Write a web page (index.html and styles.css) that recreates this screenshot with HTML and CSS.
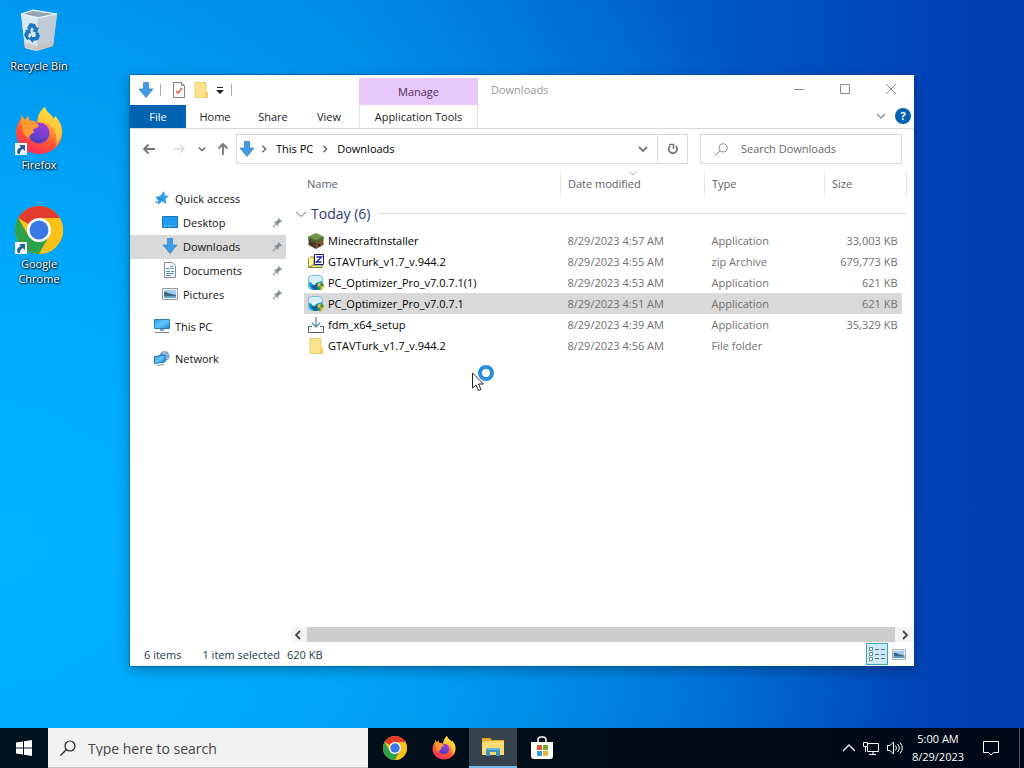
FILE: index.html
```html
<!DOCTYPE html>
<html lang="en">
<head>
    <meta charset="utf-8">
    <title>Downloads</title>
    <link rel="stylesheet" href="styles.css">
</head>
<body>
    <!-- shared icons -->
    <svg class="sprite" aria-hidden="true">
        <defs>
            <linearGradient id="ffBody" x1="0.8" y1="0" x2="0.3" y2="1">
                <stop offset="0" stop-color="#fff44f"/>
                <stop offset="0.35" stop-color="#ffa436"/>
                <stop offset="0.65" stop-color="#ff5634"/>
                <stop offset="1" stop-color="#f52b62"/>
            </linearGradient>
            <linearGradient id="ffGlobe" x1="0.7" y1="0" x2="0.3" y2="1">
                <stop offset="0" stop-color="#a03ae0"/>
                <stop offset="1" stop-color="#5542c8"/>
            </linearGradient>
            <linearGradient id="binSide" x1="0" y1="0" x2="0" y2="1">
                <stop offset="0" stop-color="#d2e4f0"/>
                <stop offset="0.7" stop-color="#d5dbe3"/>
                <stop offset="1" stop-color="#c9bfbd"/>
            </linearGradient>
            <linearGradient id="screen" x1="0" y1="0" x2="1" y2="1">
                <stop offset="0" stop-color="#2f9fe8"/>
                <stop offset="0.5" stop-color="#62c4fb"/>
                <stop offset="1" stop-color="#1683cf"/>
            </linearGradient>
        </defs>
        <symbol id="chrome" viewBox="0 0 48 48">
            <circle cx="24" cy="24" r="24" fill="#fbc116"/>
            <path d="M24 24 3.2 12A24 24 0 0 1 44.8 12H24z" fill="#e33b2e"/>
            <path d="M3.2 12A24 24 0 0 0 24 48L34.4 30 24 24 13.6 30z" fill="#2da14c"/>
            <path d="M24 12h20.8A24 24 0 0 1 24 48l10.4-18z" fill="#fbc116"/>
            <circle cx="24" cy="24" r="12" fill="#fff"/>
            <circle cx="24" cy="24" r="9.5" fill="#3b78e7"/>
        </symbol>
        <symbol id="firefox" viewBox="0 0 48 48">
            <path d="M30 0c1 5 6 7 9 12l1-3c6 6 8 12 7 19-1 11-11 19-23 19S1 38 1 26c0-6 2-10 5-14V8l4 5 3-4 1 5c3-1 6 0 8 2 0-6 3-13 8-16z" fill="url(#ffBody)"/>
            <path d="M30 0c1 5 6 7 9 12l1-3c5 6 8 14 6 21l-5 9c2-9-1-17-6-21-3-3-8-3-12-1 0-7 3-14 7-17z" fill="#ffd63f" opacity="0.75"/>
            <circle cx="24" cy="26" r="10.500" fill="url(#ffGlobe)"/>
            <path d="M6 12V8l4 5 3-4 2 6c4-1 8 1 9 4-1 2-5 2-6 4 0 1 2 2 0 3-3 2-5 3-3 6-5-3-8-6-8-12z" fill="#ff9a32"/>
            <path d="M16 30c5 4 11 3 15 0-2 5-9 8-15 3z" fill="#4a3aa8" opacity="0.5"/>
        </symbol>
        <symbol id="shortcut" viewBox="0 0 12 12">
            <path d="M0 0h12v12H0z" fill="#f7f9fb"/>
            <path d="M4 2h6v6L8 6C6 7 5 8 5 11H3C1 8 3 5 6 4z" fill="#29609f"/>
        </symbol>
        <symbol id="down-arrow" viewBox="0 0 16 16">
            <path d="M5.500.5h5V7H15l-7 8.500L1 7h4.500z" fill="#3e9be4" stroke="#2b7cc0" stroke-width="0.700"/>
        </symbol>
        <symbol id="folder" viewBox="0 0 16 16">
            <path d="M2 .5h11V10l1.500 1v4.500H2z" fill="#fae38c" stroke="#edcf69"/>
            <path d="M12.500 10.500 14.500 9v6.500h-2z" fill="#f3cd57"/>
        </symbol>
        <symbol id="optimizer" viewBox="0 0 16 16">
            <rect x="0.500" y="0.500" width="14" height="14" rx="3" fill="#d7eef7" stroke="#75b9df"/>
            <path d="M1 7c4 2 8 1 13-1v5c0 3-2 4-6 4s-7-2-7-5z" fill="#159bd0"/>
            <path d="M3 10c3 1 5 0 7-2l1 6c-4 2-7 0-8-4z" fill="#0c5e9d"/>
            <path d="M4 6l4 1-1 3-3-1z" fill="#e9fbff"/>
            <path d="M12.500 7.500 15.500 9v2.500c0 2-1 3-3 4-2-1-3-2-3-4V9z" fill="#e8c445"/>
            <path d="M12.500 7.500v4h3V9zM9.500 11.500h3v4c-2-1-3-2-3-4z" fill="#388a46"/>
        </symbol>
        <symbol id="picture" viewBox="0 0 16 12">
            <path d="M.5.5h15v11H.5z" fill="#f6f8fa" stroke="#8d9aa5"/>
            <path d="M2 2h12v8H2z" fill="#9fcdf0"/>
            <path d="M2 4c4 0 5 2 12 3v3H2z" fill="#3c6784"/>
            <path d="M2 8h12v2H2z" fill="#6ba2c4"/>
        </symbol>
        <symbol id="pin" viewBox="0 0 12 12">
            <path d="M7 1l4 4-1 .6-.8-.2L7 7.500 6.700 10 2 5.300 4.500 5l2.200-2.200L6.500 2z" fill="#87919a"/>
            <path d="M4.500 7.500 1 11" stroke="#87919a" stroke-width="1.200"/>
        </symbol>
        <symbol id="chevron" viewBox="0 0 10 10">
            <path d="M1 3l4 4 4-4" fill="none" stroke="currentColor" stroke-width="1.800"/>
        </symbol>
        <symbol id="chevron-thin" viewBox="0 0 10 10">
            <path d="M0 3l5 4.500L10 3" fill="none" stroke="currentColor"/>
        </symbol>
        <symbol id="search" viewBox="0 0 16 16">
            <circle cx="10" cy="6" r="5" fill="none" stroke="currentColor" stroke-width="1.200"/>
            <path d="M6.500 9.500.5 15.500" stroke="currentColor" stroke-width="1.200"/>
        </symbol>
    </svg>

    <main class="desktop">
        <div class="shortcuts">
            <button class="shortcut">
                <svg class="shortcut-icon" viewBox="0 0 48 48">
                    <path d="M6 6 18 2l24 4-4 32-17 5L10 40z" fill="url(#binSide)"/>
                    <path d="M6 6l17 4-1 33-12-3z" fill="#d8e8f2"/>
                    <path d="M23 10l19-4-4 32-16 5z" fill="#c0cbd5"/>
                    <path d="M8 6l10-3 21 3-16 3z" fill="#93a5b2"/>
                    <path d="M6 6 18 2l24 4-19 4z" fill="none" stroke="#eef8ff"/>
                    <path d="M9 34l13 4 16-4-1 4-15 5-12-4z" fill="#cbbfb9" opacity="0.7"/>
                    <g fill="#1977bd">
                        <path d="M12 20l3-5 5 1 2 4 2-1-2 6-5-2 2-1-2-3-2 3z"/>
                        <path d="M10 22l5-1 1 5-2-1-1 3 2 3-3 1-3-5 2-4z"/>
                        <path d="M17 29h3l1-2-1-2 3-1 2 4-2 4-5 1v2l-4-4 3-4z"/>
                    </g>
                </svg>
                <span>Recycle Bin</span>
            </button>
            <button class="shortcut">
                <span class="shortcut-picture">
                    <svg class="shortcut-icon"><use href="#firefox"/></svg>
                    <svg class="shortcut-badge"><use href="#shortcut"/></svg>
                </span>
                <span>Firefox</span>
            </button>
            <button class="shortcut">
                <span class="shortcut-picture">
                    <svg class="shortcut-icon"><use href="#chrome"/></svg>
                    <svg class="shortcut-badge"><use href="#shortcut"/></svg>
                </span>
                <span>Google<br>Chrome</span>
            </button>
        </div>

        <section class="window" aria-label="Downloads">
            <header class="titlebar">
                <div class="quick-tools">
                    <svg class="icon"><use href="#down-arrow"/></svg>
                    <span class="divider"></span>
                    <button class="plain tool-first" aria-label="Properties">
                        <svg class="icon" viewBox="0 0 16 16">
                            <path d="M2.500.5h8l3 3v12h-11z" fill="#fff" stroke="#858585"/>
                            <path d="M10.500.5v3h3" fill="none" stroke="#858585"/>
                            <path d="M5 9l2 2 4-5" fill="none" stroke="#d9684a" stroke-width="1.600"/>
                        </svg>
                    </button>
                    <button class="plain" aria-label="New folder"><svg class="icon"><use href="#folder"/></svg></button>
                    <button class="plain" aria-label="Customize">
                        <svg class="icon-small" viewBox="0 0 10 10"><path d="M2 2h6v1H2zM1 5h8L5 9z" fill="#222"/></svg>
                    </button>
                    <span class="divider"></span>
                </div>
                <div class="manage">Manage</div>
                <h1 class="window-title">Downloads</h1>
                <div class="controls">
                    <button class="plain" aria-label="Minimize">
                        <svg class="icon-small" viewBox="0 0 10 10"><path d="M0 5.500h10" stroke="#888"/></svg>
                    </button>
                    <button class="plain" aria-label="Maximize">
                        <svg class="icon-small" viewBox="0 0 10 10"><path d="M.5.5h9v9h-9z" fill="none" stroke="#888"/></svg>
                    </button>
                    <button class="plain" aria-label="Close">
                        <svg class="icon-small" viewBox="0 0 10 10"><path d="M0 0l10 10M10 0 0 10" stroke="#888"/></svg>
                    </button>
                </div>
            </header>

            <nav class="ribbon">
                <button class="tab tab-file">File</button>
                <button class="tab">Home</button>
                <button class="tab">Share</button>
                <button class="tab tab-view">View</button>
                <button class="tab tab-tools">Application Tools</button>
                <div class="ribbon-end">
                    <button class="plain" aria-label="Expand the ribbon"><svg class="icon-small muted"><use href="#chevron"/></svg></button>
                    <button class="help" aria-label="Help">?</button>
                </div>
            </nav>

            <div class="toolbar">
                <div class="history">
                    <button class="plain" aria-label="Back">
                        <svg class="icon" viewBox="0 0 16 16"><path d="M14 8H3M7.500 3.500 3 8l4.500 4.500" fill="none" stroke="#777" stroke-width="1.800"/></svg>
                    </button>
                    <button class="plain forward" aria-label="Forward">
                        <svg class="icon" viewBox="0 0 16 16"><path d="M2 8h10M8 4l4 4-4 4" fill="none" stroke="#d8d8d8" stroke-width="1.500"/></svg>
                    </button>
                    <button class="plain" aria-label="Recent locations"><svg class="icon-tiny"><use href="#chevron"/></svg></button>
                    <button class="plain" aria-label="Up">
                        <svg class="icon" viewBox="0 0 16 16"><path d="M8 14V3M3.500 7.500 8 3l4.500 4.500" fill="none" stroke="#777" stroke-width="1.800"/></svg>
                    </button>
                </div>
                <div class="address">
                    <svg class="icon"><use href="#down-arrow"/></svg>
                    <svg class="icon-tiny crumb-arrow"><use href="#chevron"/></svg>
                    <button class="plain crumb">This PC</button>
                    <svg class="icon-tiny crumb-arrow"><use href="#chevron"/></svg>
                    <button class="plain crumb">Downloads</button>
                    <button class="plain previous" aria-label="Previous locations"><svg class="icon-small"><use href="#chevron"/></svg></button>
                    <button class="plain refresh" aria-label="Refresh">
                        <svg class="icon" viewBox="0 0 16 16">
                            <path d="M10.800 5A4.200 4.200 0 1 1 5 5" fill="none" stroke="#777" stroke-width="1.800"/>
                            <path d="M4 3.500h4.500V8" fill="none" stroke="#777" stroke-width="1.600"/>
                        </svg>
                    </button>
                </div>
                <label class="search-box">
                    <svg class="search-icon"><use href="#search"/></svg>
                    <input type="text" placeholder="Search Downloads" aria-label="Search Downloads">
                </label>
            </div>

            <div class="content">
                <nav class="sidebar">
                    <a class="place place-root" href="#">
                        <svg class="icon" viewBox="0 0 16 16">
                            <path d="M10 1l1 4.500 4 .5-3.500 3 .8 5L8 11.500 3.500 15l1-5L1 7l5-1z" fill="#359de6"/>
                            <path d="M3 9h5M1 12h4" stroke="#1b79bd"/>
                        </svg>Quick access
                    </a>
                    <a class="place" href="#">
                        <svg class="icon" viewBox="0 0 16 16"><path d="M.5 2.500h15v11H.5z" fill="#229af0" stroke="#1676bd"/><path d="M2 12h8M12 12h2" stroke="#a8dcff" stroke-dasharray="1 1"/></svg>Desktop
                        <svg class="pin"><use href="#pin"/></svg>
                    </a>
                    <a class="place selected" href="#">
                        <svg class="icon"><use href="#down-arrow"/></svg>Downloads
                        <svg class="pin"><use href="#pin"/></svg>
                    </a>
                    <a class="place" href="#">
                        <svg class="icon" viewBox="0 0 16 16"><path d="M2.500.5h8l3 3v12h-11z" fill="#fff" stroke="#7c8c98"/><path d="M4 6.500h3M8 4.500h3M8 6.500h4M4 9.500h4M9 9.500h3M4 11.500h8M4 13.500h5" stroke="#4d93bf"/></svg>Documents
                        <svg class="pin"><use href="#pin"/></svg>
                    </a>
                    <a class="place" href="#">
                        <svg class="icon"><use href="#picture"/></svg>Pictures
                        <svg class="pin"><use href="#pin"/></svg>
                    </a>
                    <a class="place place-root spaced" href="#">
                        <svg class="icon" viewBox="0 0 16 16"><path d="M.5 1.500h15v9H.5z" fill="url(#screen)" stroke="#2b80b7"/><path d="M6 11h4v2H6z" fill="#8aa3b5"/><path d="M1 14.500h14" stroke="#71899b"/></svg>This PC
                    </a>
                    <a class="place place-root spaced" href="#">
                        <svg class="icon" viewBox="0 0 16 16"><circle cx="10.500" cy="6" r="5" fill="#6d9fc4"/><path d="M8 2c3 1 2 4 6 7M11 1c-1 3 1 4 4 4" stroke="#b9dbf0" fill="none"/><path d="M.5 6.500 11 5v7L.5 13.500z" fill="url(#screen)" stroke="#1b75b3"/><path d="M3 15.500l7-1" stroke="#7890a0"/></svg>Network
                    </a>
                </nav>

                <div class="files">
                    <table>
                        <colgroup>
                            <col class="col-edge"><col><col class="col-date"><col class="col-type"><col class="col-size"><col class="col-end">
                        </colgroup>
                        <thead>
                            <tr>
                                <td></td>
                                <th class="head-name">Name</th>
                                <th class="sorted"><svg class="sort-mark"><use href="#chevron-thin"/></svg>Date modified</th>
                                <th>Type</th>
                                <th colspan="2" class="head-size">Size</th>
                            </tr>
                        </thead>
                        <tbody>
                            <tr class="group">
                                <th colspan="6"><div class="group-line"><svg class="group-chevron"><use href="#chevron-thin"/></svg>Today (6)</div></th>
                            </tr>
                            <tr>
                                <td></td>
                                <td class="name"><div class="file">
                                    <svg class="icon" viewBox="0 0 16 16"><path d="M8 0l7.500 3.500L8 7.500.5 3.500z" fill="#71944a"/><path d="M.5 3.500 8 7.500V16L.5 12z" fill="#543b27"/><path d="M15.500 3.500 8 7.500V16l7.500-4z" fill="#795034"/><path d="M.5 3.500 8 7.500l7.500-4v3L13 7v2l-3-1v2L8 9 6 10V8L3 9V6L.5 7z" fill="#496c2b"/><path d="M3 10h2v2H3zM10 11h2v2h-2z" fill="#352518"/></svg>MinecraftInstaller
                                </div></td>
                                <td>8/29/2023 4:57 AM</td><td>Application</td><td class="size">33,003 KB</td><td></td>
                            </tr>
                            <tr>
                                <td></td>
                                <td class="name"><div class="file">
                                    <svg class="icon" viewBox="0 0 16 16"><path d="M.5 13.500V5L2.500 3H6v10.500z" fill="#fff79b" stroke="#999026"/><path d="M1 13.500h13V11H5z" fill="#f7ef80" stroke="#77783c"/><path d="M6.500.5h9v10h-9z" fill="#fff" stroke="#17178e"/><path d="M8.500 3h5l-5 5h5" fill="none" stroke="#2222a1" stroke-width="1.300"/></svg>GTAVTurk_v1.7_v.944.2
                                </div></td>
                                <td>8/29/2023 4:55 AM</td><td>zip Archive</td><td class="size">679,773 KB</td><td></td>
                            </tr>
                            <tr>
                                <td></td>
                                <td class="name"><div class="file"><svg class="icon"><use href="#optimizer"/></svg>PC_Optimizer_Pro_v7.0.7.1(1)</div></td>
                                <td>8/29/2023 4:53 AM</td><td>Application</td><td class="size">621 KB</td><td></td>
                            </tr>
                            <tr class="selected-row">
                                <td></td>
                                <td class="name"><div class="file"><svg class="icon"><use href="#optimizer"/></svg>PC_Optimizer_Pro_v7.0.7.1</div></td>
                                <td>8/29/2023 4:51 AM</td><td>Application</td><td class="size">621 KB</td><td></td>
                            </tr>
                            <tr>
                                <td></td>
                                <td class="name"><div class="file">
                                    <svg class="icon" viewBox="0 0 16 16"><path d="M4 9.500H.5v6h15v-6H12" fill="none" stroke="#4f5b66"/><path d="M8 0v10M4 6l4 4 4-4" fill="none" stroke="#4f84a8" stroke-width="1.200"/></svg>fdm_x64_setup
                                </div></td>
                                <td>8/29/2023 4:39 AM</td><td>Application</td><td class="size">35,329 KB</td><td></td>
                            </tr>
                            <tr>
                                <td></td>
                                <td class="name"><div class="file"><svg class="icon"><use href="#folder"/></svg>GTAVTurk_v1.7_v.944.2</div></td>
                                <td>8/29/2023 4:56 AM</td><td>File folder</td><td></td><td></td>
                            </tr>
                        </tbody>
                    </table>
                    <div class="scrollbar">
                        <button class="plain scroll-left" aria-label="Scroll left"><svg class="icon-small"><use href="#chevron"/></svg></button>
                        <div class="thumb"></div>
                        <button class="plain scroll-right" aria-label="Scroll right"><svg class="icon-small"><use href="#chevron"/></svg></button>
                    </div>
                </div>
            </div>

            <footer class="status">
                <span class="count">6 items</span>
                <span class="chosen">1 item selected</span>
                <span>620 KB</span>
                <div class="views">
                    <button class="plain view-button active" aria-label="Details view">
                        <svg class="icon" viewBox="0 0 16 16"><path d="M.5 1.500h3v3h-3zM.5 6.500h3v3h-3zM.5 11.500h3v3h-3z" fill="#fff" stroke="#6f8791"/><path d="M6 3.500h4M12 3.500h4M6 8.500h4M12 8.500h4M6 12.500h4M12 12.500h4" stroke="#5b717c"/></svg>
                    </button>
                    <button class="plain view-button" aria-label="Large icons view"><svg class="view-picture"><use href="#picture"/></svg></button>
                </div>
            </footer>
        </section>

        <svg class="cursor" viewBox="0 0 24 28">
            <circle cx="15" cy="8" r="6" fill="#fff" stroke="#2a8cdd" stroke-width="4"/>
            <path d="M1.500 8v15l3.500-3 2.500 5.500 2.500-1L7.500 19h5z" fill="#fff" stroke="#222"/>
        </svg>
    </main>

    <footer class="taskbar">
        <button class="plain start" aria-label="Start">
            <svg class="icon" viewBox="0 0 16 16"><path d="M0 2.500l7-1v6H0zM8 1.300 16 0v7.500H8zM0 8.500h7v6l-7-1zM8 8.500h8V16l-8-1.300z" fill="#fff"/></svg>
        </button>
        <label class="task-search">
            <svg class="icon"><use href="#search"/></svg>
            <input type="text" placeholder="Type here to search" aria-label="Type here to search">
        </label>
        <div class="apps">
            <button class="plain app" aria-label="Google Chrome"><svg class="app-icon"><use href="#chrome"/></svg></button>
            <button class="plain app" aria-label="Firefox"><svg class="app-icon"><use href="#firefox"/></svg></button>
            <button class="plain app running" aria-label="File Explorer">
                <svg class="app-icon" viewBox="0 0 24 24"><path d="M1 3h8l2 2h12v15H1z" fill="#e9a927"/><path d="M3 6h20v14H1V8z" fill="#ffda73"/><path d="M5 21v-8h14v8h-4v-4H9v4z" fill="#3e91c2"/><path d="M5 13h14v2H5z" fill="#66b2d9"/></svg>
            </button>
            <button class="plain app" aria-label="Microsoft Store">
                <svg class="app-icon" viewBox="0 0 24 24"><path d="M8 7V4c0-2 1-3 3-3h2c2 0 3 1 3 3v3" fill="none" stroke="#fff" stroke-width="1.500"/><path d="M1 6h22v14c0 2-1 3-3 3H4c-2 0-3-1-3-3z" fill="#fff"/><path d="M7 9h5v5H7z" fill="#df5a35"/><path d="M13 9h5v5h-5z" fill="#75a928"/><path d="M7 15h5v5H7z" fill="#2ba1d2"/><path d="M13 15h5v5h-5z" fill="#edb43b"/></svg>
            </button>
        </div>
        <div class="tray">
            <button class="plain" aria-label="Show hidden icons"><svg class="tray-arrow" viewBox="0 0 12 12"><path d="M0 9l6-6 6 6" fill="none" stroke="#fff" stroke-width="1.300"/></svg></button>
            <button class="plain" aria-label="Network status"><svg class="icon" viewBox="0 0 16 16"><path d="M5 3.500h10.500v8h-11V7M10 12v3M6 14.500h7" fill="none" stroke="#fff"/><path d="M.5 2.500h4v4h-4zM2.500 7v5" fill="none" stroke="#fff"/></svg></button>
            <button class="plain" aria-label="Volume"><svg class="icon" viewBox="0 0 16 16"><path d="M0 5.500h3L6.500 2v12L3 10.500H.5v-5" fill="none" stroke="#fff"/><path d="M8.500 5.500q2 2.500 0 5M10.500 4q3.500 4 0 8M13 2.500q4.500 5.500 0 11" fill="none" stroke="#fff"/></svg></button>
            <time class="clock" datetime="2023-08-29T05:00">5:00 AM<br>8/29/2023</time>
            <button class="plain notifications" aria-label="Notifications"><svg class="icon" viewBox="0 0 16 16"><path d="M.5 1.500h15v11h-5L8 15l-2.500-2.500h-5z" fill="none" stroke="#fff"/></svg></button>
        </div>
    </footer>
</body>
</html>
```
FILE: styles.css
```css
* {
    box-sizing: border-box;
}

body {
    margin: 0;
    min-height: 100vh;
    display: flex;
    flex-direction: column;
    font-family: "Open Sans", "Noto Sans", sans-serif;
    font-size: 12px;
    line-height: 15px;
    color: #222;
}

button, input {
    font: inherit;
    color: inherit;
}

svg {
    display: block;
    flex: none;
}

.sprite {
    position: absolute;
    width: 0;
    height: 0;
}

.plain {
    display: flex;
    align-items: center;
    justify-content: center;
    padding: 0;
    border: none;
    background: none;
}

.icon { width: 16px; height: 16px; }
.icon-small { width: 10px; height: 10px; }
.icon-tiny { width: 8px; height: 8px; color: #666; }
.muted { color: #aaa; }

/* Desktop */
.desktop {
    flex: 1;
    position: relative;
    background:
        radial-gradient(ellipse 90% 110% at 0% 75%, #00b2ff 0%, rgba(0, 172, 255, 0.9) 35%, rgba(0, 150, 240, 0) 100%),
        linear-gradient(90deg, #0088e4 0%, #007cdc 35%, #0058c8 70%, #0044b8 90%, #003eb0 100%);
}

.shortcuts {
    display: flex;
    flex-direction: column;
    gap: 18px;
    width: 78px;
    padding-top: 8px;
}

.shortcut {
    display: flex;
    flex-direction: column;
    align-items: center;
    gap: 2px;
    min-height: 81px;
    padding: 0;
    border: none;
    background: none;
    color: #fff;
    font-size: 11px;
    text-shadow: 1px 1px 2px #000, 0 0 2px #000;
}

.shortcut-picture {
    position: relative;
}

.shortcut-icon {
    width: 48px;
    height: 48px;
}

.shortcut-badge {
    position: absolute;
    left: 0;
    bottom: 0;
    width: 12px;
    height: 12px;
}

/* Explorer window */
.window {
    position: absolute;
    top: 75px;
    right: 110px;
    bottom: 62px;
    left: 130px;
    display: flex;
    flex-direction: column;
    background: #fff;
    font-size: 11px;
    box-shadow: 0 0 0 1px rgba(0, 70, 120, 0.4), 0 4px 12px rgba(0, 0, 0, 0.3);
}

.titlebar {
    display: flex;
    height: 30px;
}

.quick-tools {
    display: flex;
    align-items: center;
    gap: 6px;
    width: 229px;
    padding-left: 8px;
}

.divider {
    width: 1px;
    height: 12px;
    background: #aaa;
}

.tool-first {
    margin-left: 4px;
}

.manage {
    width: 119px;
    margin-top: 3px;
    background: #e9c9fb;
    color: #472c58;
    line-height: 27px;
    text-align: center;
}

.window-title {
    margin: 0 0 0 13px;
    font-size: 11px;
    font-weight: normal;
    line-height: 30px;
    color: #999;
}

.controls {
    display: flex;
    margin-left: auto;
    padding-bottom: 2px;
}

.controls button {
    width: 46px;
}

.ribbon {
    display: flex;
    height: 24px;
    border-bottom: 1px solid #d9d9d9;
}

.tab {
    width: 58px;
    padding: 0;
    border: none;
    background: none;
}

.tab-file {
    width: 56px;
    background: #0063b1;
    color: #fff;
}

.tab-view {
    width: 54px;
}

.tab-tools {
    width: 119px;
    margin-left: 3px;
    border: 1px solid #e3e3e3;
    border-width: 0 1px;
}

.ribbon-end {
    display: flex;
    align-items: center;
    gap: 9px;
    margin-left: auto;
    padding: 0 3px 2px 0;
}

.help {
    width: 16px;
    height: 16px;
    padding: 0;
    border: none;
    border-radius: 50%;
    background: #0063b1;
    color: #fff;
    font-weight: bold;
}

.toolbar {
    display: flex;
    align-items: center;
    height: 40px;
    padding-right: 12px;
}

.history {
    display: flex;
    align-items: center;
    justify-content: space-between;
    width: 106px;
    padding: 0 5px 0 11px;
}

.forward {
    margin-left: 6px;
}

.address {
    display: flex;
    flex: 1;
    align-items: center;
    height: 30px;
    margin-right: 12px;
    padding-left: 2px;
    border: 1px solid #d9d9d9;
    color: #000;
}

.crumb {
    margin: 0 8px;
    padding-bottom: 2px;
}

.crumb-arrow {
    margin-left: 5px;
    transform: rotate(-90deg);
}

.crumb + .crumb-arrow {
    margin-left: 0;
}

.previous {
    width: 28px;
    height: 100%;
    margin-left: auto;
    color: #777;
}

.refresh {
    width: 30px;
    height: 100%;
    border-left: 1px solid #d9d9d9;
}

.search-box {
    display: flex;
    align-items: center;
    gap: 13px;
    width: 202px;
    height: 30px;
    padding-left: 14px;
    border: 1px solid #d9d9d9;
    color: #888;
}

.search-icon {
    width: 13px;
    height: 13px;
}

.search-box input, .task-search input {
    flex: 1;
    min-width: 0;
    padding: 0 0 2px;
    border: none;
    outline: none;
    background: none;
}

.search-box input::placeholder {
    color: #666;
}

.content {
    display: flex;
    flex: 1;
    min-height: 0;
}

.sidebar {
    width: 156px;
    padding-top: 18px;
}

.place {
    display: flex;
    align-items: center;
    gap: 5px;
    height: 24px;
    padding: 0 3px 2px 32px;
    color: #111;
    text-decoration: none;
}

.place-root {
    padding-left: 24px;
}

.spaced {
    margin-top: 8px;
}

.place.selected {
    background: #d9d9d9;
}

.pin {
    width: 11px;
    height: 11px;
    margin-left: auto;
}

.files {
    display: flex;
    flex: 1;
    flex-direction: column;
    padding-left: 10px;
}

table {
    width: calc(100% - 7px);
    table-layout: fixed;
    border-collapse: collapse;
    margin-top: 2px;
}

.col-edge { width: 8px; }
.col-date { width: 144px; }
.col-type { width: 120px; }
.col-size { width: 77px; }
.col-end { width: 5px; }

th, td {
    padding: 0 4px 0 7px;
    font-weight: normal;
    text-align: left;
    white-space: nowrap;
}

td {
    color: #707070;
}

td:first-child, td:last-child {
    padding: 0;
}

thead th {
    height: 26px;
    padding-bottom: 2px;
    border-left: 1px solid #e5e5e5;
    color: #58616b;
}

thead .head-name {
    border-left: none;
    padding-left: 3px;
}

thead .head-size {
    border-right: 1px solid #e5e5e5;
}

.sorted {
    position: relative;
}

.sort-mark {
    position: absolute;
    top: -2px;
    left: calc(50% - 4px);
    width: 8px;
    height: 8px;
    color: #999;
}

.group th {
    height: 33px;
    padding: 0;
    color: #29397c;
    font-size: 14px;
}

.group-line {
    display: flex;
    align-items: center;
    gap: 5px;
}

.group-line::after {
    content: "";
    flex: 1;
    height: 1px;
    margin-left: 3px;
    background: #dfdfdf;
}

.group-chevron {
    width: 10px;
    height: 10px;
    color: #777;
}

tbody td {
    height: 21px;
}

td.name {
    padding-left: 4px;
    color: #000;
}

.file {
    display: flex;
    align-items: center;
    gap: 4px;
}

.size {
    padding-right: 4px;
    text-align: right;
}

.selected-row td:not(:first-child):not(:last-child) {
    background: #d9d9d9;
}

.scrollbar {
    display: flex;
    height: 15px;
    margin-top: auto;
    margin-left: -4px;
    background: #f3f3f3;
    color: #444;
}

.scroll-left {
    width: 15px;
    padding-right: 3px;
}

.scroll-right {
    width: 19px;
}

.scroll-left svg { transform: rotate(90deg); }
.scroll-right svg { transform: rotate(-90deg); }

.thumb {
    flex: 1;
    background: #cdcdcd;
}

.status {
    display: flex;
    align-items: center;
    height: 24px;
    padding: 0 4px 0 14px;
    color: #26374f;
}

.count {
    margin-right: 21px;
}

.chosen {
    margin-right: 7px;
}

.views {
    display: flex;
    margin-left: auto;
}

.view-button {
    width: 22px;
    height: 22px;
}

.view-button.active {
    border: 1px solid #3aa5b9;
    background: #cdeaf4;
}

.view-picture {
    width: 14px;
    height: 11px;
}

.cursor {
    position: absolute;
    top: 365px;
    left: 471px;
    width: 24px;
    height: 28px;
}

/* Taskbar */
.taskbar {
    display: flex;
    height: 40px;
    background: linear-gradient(90deg, #00131e 0%, #000d17 60%, #000817 100%);
    color: #fff;
}

.start {
    width: 48px;
}

.task-search {
    display: flex;
    align-items: center;
    gap: 12px;
    width: 320px;
    padding-left: 12px;
    border: 1px solid #c6c6c6;
    border-width: 0 0 1px;
    background: #f2f2f2;
    color: #222;
    font-size: 14px;
}

.task-search input {
    padding: 2px 0 0;
}

.task-search input::placeholder {
    color: #444;
}

.apps {
    display: flex;
    gap: 1px;
    padding-left: 3px;
}

.app {
    width: 48px;
}

.app.running {
    background: #34434c;
    border-bottom: 2px solid #76b9ed;
}

.app-icon {
    width: 24px;
    height: 24px;
}

.tray {
    display: flex;
    align-items: center;
    gap: 8px;
    margin-left: auto;
    margin-right: 4px;
    padding-right: 20px;
    border-right: 1px solid #4b535c;
}

.tray-arrow {
    width: 12px;
    height: 12px;
}

.clock {
    width: 54px;
    font-size: 11px;
    line-height: 18px;
    text-align: center;
}

.notifications {
    margin-left: 10px;
}
```
